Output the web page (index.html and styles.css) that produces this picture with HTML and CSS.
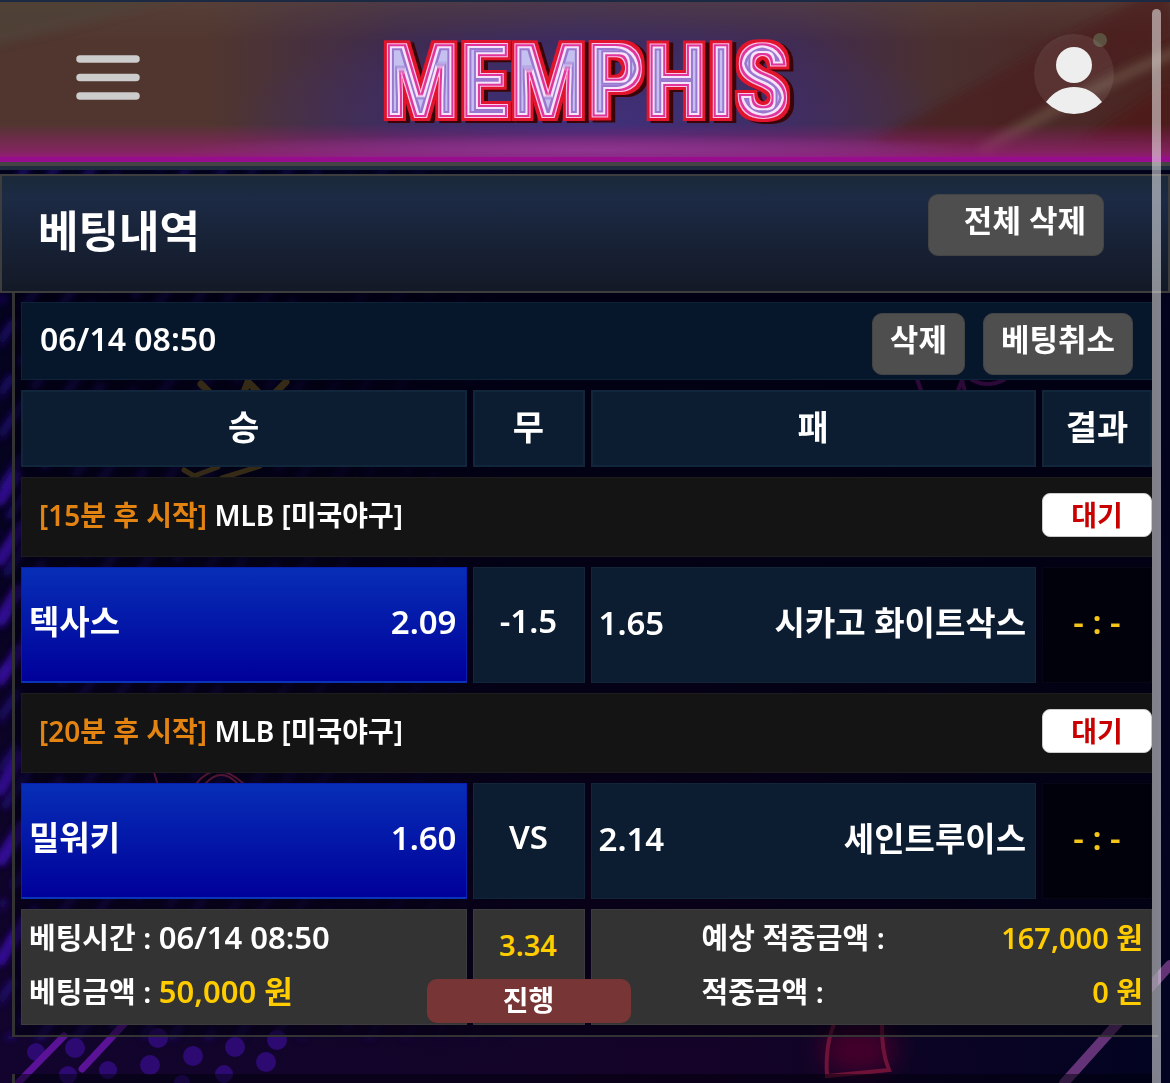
FILE: index.html
```html
<!DOCTYPE html>
<html lang="ko">
<head>
<meta charset="utf-8">
<meta name="viewport" content="width=device-width, initial-scale=1">
<title>베팅내역</title>
<link rel="stylesheet" href="styles.css">
</head>
<body>
<svg class="backdrop" viewBox="0 0 1170 1083" preserveAspectRatio="xMidYMid slice" aria-hidden="true">
  <defs>
    <linearGradient id="night" x1="0" y1="0" x2="1" y2="0">
      <stop offset="0" stop-color="#13042f"/>
      <stop offset=".3" stop-color="#12042a"/>
      <stop offset=".6" stop-color="#150329"/>
      <stop offset="1" stop-color="#020421"/>
    </linearGradient>
    <linearGradient id="dusk" x1="0" y1="0" x2="0" y2="1">
      <stop offset="0" stop-color="#01021a"/>
      <stop offset=".5" stop-color="#04031d" stop-opacity=".8"/>
      <stop offset="1" stop-color="#08031c" stop-opacity="0"/>
    </linearGradient>
    <pattern id="streaks" width="54" height="60" patternUnits="userSpaceOnUse" patternTransform="rotate(35)">
      <path d="M10 0v44M34 18v40" stroke="#2a0fa0" stroke-width="9" stroke-linecap="round" opacity=".5"/>
    </pattern>
    <linearGradient id="fade"><stop offset="0" stop-color="#fff"/><stop offset="1" stop-color="#000"/></linearGradient>
    <mask id="left"><rect width="520" height="1083" fill="url(#fade)"/></mask>
    <filter id="soft" x="-80%" y="-80%" width="260%" height="260%"><feGaussianBlur stdDeviation="12"/></filter>
    <filter id="blur"><feGaussianBlur stdDeviation="3"/></filter>
  </defs>
  <rect width="1170" height="1083" fill="url(#night)"/>
  <rect width="1170" height="1083" fill="url(#dusk)"/>
  <g mask="url(#left)"><rect width="520" height="1040" fill="url(#streaks)" filter="url(#blur)"/></g>
  <g fill="#2d0a72">
    <circle cx="36" cy="1052" r="9"/><circle cx="75" cy="1048" r="10"/><circle cx="158" cy="1038" r="10"/><circle cx="193" cy="1056" r="10"/><circle cx="235" cy="1047" r="10"/><circle cx="277" cy="1040" r="10"/>
    <circle cx="150" cy="1065" r="10"/><circle cx="108" cy="1070" r="9"/><circle cx="68" cy="1075" r="9"/><circle cx="224" cy="1074" r="9"/><circle cx="266" cy="1062" r="10"/><circle cx="182" cy="1083" r="8"/>
  </g>
  <g fill="none" stroke-linecap="round">
    <path d="M0 500l16-24M0 560l22-34M0 620l18-30M0 680l20-30M0 790l20-34M0 860l22-34M0 960l26-40" stroke="#3b0fa8" stroke-width="12" opacity=".8" filter="url(#blur)"/>
    <path d="M18 1083L64 1036M82 1069l42-45" stroke="#5a1296" stroke-width="7"/>
    <path d="M201 384l12 12M244 392l4-10 12 12M276 392l10-10" stroke="#6a5520" stroke-width="7"/>
    <path d="M184 470l10 6 24-9M222 478l38-12" stroke="#6a5520" stroke-width="5"/>
    <path d="M154 772l4 14M196 784q20-26 48 0M205 784q16-18 33 0" stroke="#a52a58" stroke-width="2"/>
    <path d="M917 379l5 14M956 396l6-16 4 16M972 380q15 8 32 0" stroke="#5a1268" stroke-width="4"/>
    <ellipse cx="858" cy="1050" rx="38" ry="24" fill="#45002a" filter="url(#soft)"/>
    <path d="M835 1022q-10 22-8 54l62-6q-8-20-7-48" stroke="#6e1238" stroke-width="4"/>
    <path d="M1064 1083L1170 965" stroke="#633277" stroke-width="10"/>
  </g>
</svg>

<div class="page">
  <header class="topbar">
    <svg class="topbar-art" viewBox="0 0 1170 160" preserveAspectRatio="none" aria-hidden="true">
      <defs>
        <linearGradient id="base">
          <stop offset="0" stop-color="#50362f"/><stop offset=".18" stop-color="#50362f"/>
          <stop offset=".34" stop-color="#3e2a4c"/><stop offset=".5" stop-color="#3b295a"/>
          <stop offset=".68" stop-color="#402b50"/><stop offset=".8" stop-color="#4a3030"/>
          <stop offset="1" stop-color="#4b2420"/>
        </linearGradient>
        <radialGradient id="indigo"><stop offset="0" stop-color="#40307a"/><stop offset="1" stop-color="#40307a" stop-opacity="0"/></radialGradient>
        <linearGradient id="haze" x2="0" y2="1"><stop offset="0" stop-color="#5c4840" stop-opacity=".5"/><stop offset="1" stop-color="#5c4840" stop-opacity="0"/></linearGradient>
        <linearGradient id="glow" x2="0" y2="1">
          <stop offset="0" stop-color="#a01b78" stop-opacity="0"/><stop offset=".7" stop-color="#961f70" stop-opacity=".7"/><stop offset="1" stop-color="#a0118f"/>
        </linearGradient>
        <radialGradient id="violet"><stop offset="0" stop-color="#8d3590"/><stop offset="1" stop-color="#8d3590" stop-opacity="0"/></radialGradient>
        <filter id="mist"><feGaussianBlur stdDeviation="4"/></filter>
      </defs>
      <rect width="1170" height="160" fill="url(#base)"/>
      <ellipse cx="590" cy="120" rx="360" ry="110" fill="url(#indigo)"/>
      <rect width="1170" height="40" fill="url(#haze)"/>
      <path d="M-20-20h260L90 20-20 48z" fill="#4f4238" opacity=".8" filter="url(#mist)"/>
      <path d="M870 140L1170-20v50L960 160z" fill="#4b1a1c" opacity=".6" filter="url(#mist)"/>
      <path d="M1080 140l90-60v60z" fill="#501812" opacity=".6" filter="url(#mist)"/>
      <path d="M980 150Q1080 90 1180 48" fill="none" stroke="#6d5145" stroke-width="11" opacity=".7" filter="url(#mist)"/>
      <circle cx="1100" cy="38" r="7" fill="#5c5140"/>
      <rect y="122" width="1170" height="38" fill="url(#glow)"/>
      <ellipse cx="590" cy="148" rx="420" ry="16" fill="url(#violet)"/>
      <rect y="155" width="1170" height="5" fill="#980d8e"/>
    </svg>
    <button class="icon-button" type="button" aria-label="메뉴">
      <svg width="64" height="45" viewBox="0 0 64 45" aria-hidden="true"><path d="M4 4h56M4 22.500h56M4 41h56" stroke="#ccc" stroke-width="7.500" stroke-linecap="round"/></svg>
    </button>
    <a class="logo" href="#">
      <svg width="460" height="136" viewBox="0 0 460 136">
        <defs>
          <filter id="neon" x="-5%" y="-10%" width="110%" height="125%" color-interpolation-filters="sRGB">
            <feMorphology in="SourceAlpha" operator="dilate" radius="4" result="wide"/>
            <feMorphology in="SourceAlpha" operator="dilate" radius="1" result="mid"/>
            <feMorphology in="SourceAlpha" operator="erode" radius="2" result="slim"/>
            <feMorphology in="SourceAlpha" operator="erode" radius="4" result="core"/>
            <feMorphology in="SourceAlpha" operator="erode" radius="6" result="heart"/>
            <feOffset in="wide" dx="4" dy="2" result="shade"/>
            <feFlood flood-color="#3a0508"/><feComposite in2="shade" operator="in" result="a"/>
            <feFlood flood-color="#e0142c"/><feComposite in2="wide" operator="in" result="b"/>
            <feFlood flood-color="#ffc4ea"/><feComposite in2="mid" operator="in" result="c"/>
            <feFlood flood-color="#e0369c"/><feComposite in2="SourceAlpha" operator="in" result="d"/>
            <feFlood flood-color="#f6e4fa"/><feComposite in2="slim" operator="in" result="e"/>
            <feFlood flood-color="#9a78d0"/><feComposite in2="core" operator="in" result="f"/>
            <feFlood flood-color="#c4c0f0"/><feComposite in2="heart" operator="in" result="g"/>
            <feMerge><feMergeNode in="a"/><feMergeNode in="b"/><feMergeNode in="c"/><feMergeNode in="d"/><feMergeNode in="e"/><feMergeNode in="f"/><feMergeNode in="g"/></feMerge>
          </filter>
        </defs>
        <text class="neon" x="229" y="108" text-anchor="middle" filter="url(#neon)">MEMPHIS</text>
      </svg>
    </a>
    <button class="icon-button profile" type="button" aria-label="내 정보">
      <svg width="82" height="82" viewBox="0 0 82 82" aria-hidden="true">
        <circle cx="41" cy="41" r="40" fill="#fff" opacity=".08"/>
        <circle cx="41" cy="32" r="18" fill="#eee"/>
        <path d="M13 69Q24 54 41 54t28 15Q57 81 41 81T13 69z" fill="#eee"/>
      </svg>
    </button>
  </header>

  <div class="title-bar">
    <h1>베팅내역</h1>
    <button class="btn btn-all" type="button">전체 삭제</button>
  </div>

  <main class="slips">
    <section class="slip">
      <div class="slip-head">
        <time>06/14 08:50</time>
        <div class="actions">
          <button class="btn" type="button">삭제</button>
          <button class="btn" type="button">베팅취소</button>
        </div>
      </div>
      <table class="bets">
        <colgroup><col><col class="col-mid"><col><col class="col-result"></colgroup>
        <thead>
          <tr><th scope="col">승</th><th scope="col">무</th><th scope="col">패</th><th scope="col">결과</th></tr>
        </thead>
        <tbody>
          <tr class="league">
            <td colspan="4"><div class="line"><p><span class="soon">[15분 후 시작]</span> MLB [미국야구]</p><span class="state">대기</span></div></td>
          </tr>
          <tr class="match">
            <td class="picked"><div class="line"><span>텍사스</span><span>2.09</span></div></td>
            <td class="mid">-1.5</td>
            <td><div class="line"><span>1.65</span><span>시카고 화이트삭스</span></div></td>
            <td class="score">- : -</td>
          </tr>
          <tr class="league">
            <td colspan="4"><div class="line"><p><span class="soon">[20분 후 시작]</span> MLB [미국야구]</p><span class="state">대기</span></div></td>
          </tr>
          <tr class="match">
            <td class="picked"><div class="line"><span>밀워키</span><span>1.60</span></div></td>
            <td class="mid">VS</td>
            <td><div class="line"><span>2.14</span><span>세인트루이스</span></div></td>
            <td class="score">- : -</td>
          </tr>
        </tbody>
        <tfoot>
          <tr class="summary">
            <td class="stake"><p>베팅시간 : <span>06/14 08:50</span></p><p>베팅금액 : <b>50,000 원</b></p></td>
            <td class="odds"><b>3.34</b><span class="progress">진행</span></td>
            <td colspan="2" class="payout"><p>예상 적중금액 : <b>167,000 원</b></p><p>적중금액 : <b>0 원</b></p></td>
          </tr>
        </tfoot>
      </table>
    </section>
    <section class="slip slip-next"></section>
  </main>
</div>
<div class="scroll-thumb"></div>
</body>
</html>
```
FILE: styles.css
```css
* { box-sizing: border-box; }

body {
  margin: 0;
  background: #04031c;
  color: #fff;
  font-family: "Noto Sans", "Noto Sans CJK KR", sans-serif;
  font-size: 32px;
  font-weight: 600;
  line-height: 40px;
}

h1, p { margin: 0; }
b { font-weight: inherit; color: #fc0; }
button { font: inherit; color: inherit; border: 0; cursor: pointer; }

.backdrop {
  position: fixed;
  inset: 0;
  z-index: -1;
  width: 100%;
  height: 100%;
}

.page {
  display: flex;
  flex-direction: column;
  min-height: 100vh;
}

/* Top bar */
.topbar {
  position: relative;
  display: flex;
  align-items: center;
  justify-content: space-between;
  height: 170px;
  padding: 0 55px 14px 76px;
  border-top: 2px solid #1b2a42;
  border-bottom: 4px solid #1f2c40;
  box-shadow: inset 0 -4px #444;
}
.topbar-art {
  position: absolute;
  inset: 0 0 4px;
  z-index: -1;
  width: 100%;
  height: 160px;
}
.icon-button { padding: 0; background: none; display: flex; }
.profile { padding-bottom: 6px; }
.logo { display: flex; }
.neon {
  font-family: "Roboto Condensed", "Noto Sans Condensed", "Open Sans Condensed", "Noto Sans CJK KR", sans-serif;
  font-size: 102px;
  font-weight: 700;
}

/* Page title */
.title-bar {
  display: flex;
  align-items: flex-start;
  justify-content: space-between;
  height: 119px;
  margin-top: 4px;
  padding: 18px 64px 0 36px;
  border: 2px solid #3d3d3d;
  background: linear-gradient(#1b293a, #1c2a44 20%, #131926);
}
h1 { font-size: 44px; font-weight: 700; line-height: 74px; }

.btn {
  height: 62px;
  padding: 0 17px 10px;
  border: 1px solid #444;
  border-radius: 10px;
  background: #4e4e4e;
  font-size: 31px;
  font-weight: 700;
  line-height: 50px;
}
.btn-all { padding-left: 35px; }

/* Bet slips */
.slips {
  display: flex;
  flex: 1;
  flex-direction: column;
  gap: 37px;
  padding: 0 12px;
}
.slip {
  border: solid #333;
  border-width: 0 0 2px 3px;
  background: rgba(0, 0, 10, .5);
}
.slip-head {
  display: flex;
  align-items: center;
  justify-content: space-between;
  height: 78px;
  margin: 9px 6px 0;
  padding: 6px 19px 0 18px;
  border: 1px solid #0f2338;
  border-right: 0;
  background: #06162b;
}
.slip-head time { padding-bottom: 10px; }
.actions { display: flex; gap: 18px; }
.slip-next { flex: 1; min-height: 12px; border-bottom: 0; }

.bets {
  width: 100%;
  table-layout: fixed;
  border-spacing: 6px 10px;
}
.col-mid { width: 112px; }
.col-result { width: 110px; }
.bets th, .bets td { padding: 0; }
.bets th {
  height: 77px;
  padding-bottom: 4px;
  border: 2px solid #11263a;
  background: #0c1c31;
  font-size: 34px;
  font-weight: 700;
}
.line {
  display: flex;
  align-items: center;
  justify-content: space-between;
}

.league td {
  height: 80px;
  padding-bottom: 4px;
  border: 1px solid #1c1c1c;
  border-right: 0;
  background: #141414;
  font-size: 28px;
}
.league .line { padding-left: 17px; }
.soon { color: #e38312; }
.state {
  width: 110px;
  height: 44px;
  border: 1px solid #ccc;
  border-radius: 8px;
  background: #fff;
  color: #c80000;
  font-weight: 700;
  line-height: 42px;
  text-align: center;
}

.match td {
  height: 116px;
  border: 1px solid #132539;
  background: #0c1c31;
  font-size: 33px;
}
.match .line { padding: 0 9px 5px 7px; }
.match .picked {
  border-color: #0a1eb0 #0a1eb0 #0b35b8;
  border-bottom-width: 2px;
  background: linear-gradient(#072eb6, #00009a);
}
.match .mid { padding-bottom: 8px; text-align: center; }
.match .score {
  padding-bottom: 6px;
  border-color: #060614;
  background: #01010c;
  color: #f5c518;
  text-align: center;
}

.summary td {
  height: 116px;
  padding: 1px 8px 0 7px;
  border: 1px solid #3c3c3c;
  background: #333;
  font-size: 29px;
  line-height: 54px;
  vertical-align: top;
}
.stake span, .stake b { font-size: 31px; line-height: 40px; }
.summary .odds { position: relative; padding-top: 8px; text-align: center; }
.progress {
  position: absolute;
  bottom: 1px;
  left: 50%;
  width: 204px;
  height: 44px;
  margin-left: -102px;
  border-radius: 10px;
  background: #773635;
  font-size: 28px;
  font-weight: 700;
  line-height: 42px;
}
.summary .payout { padding-left: 110px; }
.payout p { display: flex; justify-content: space-between; }

.scroll-thumb {
  position: fixed;
  top: 9px;
  right: 9px;
  bottom: -9px;
  width: 9px;
  border-radius: 5px;
  background: rgba(255, 255, 255, .5);
}
```
